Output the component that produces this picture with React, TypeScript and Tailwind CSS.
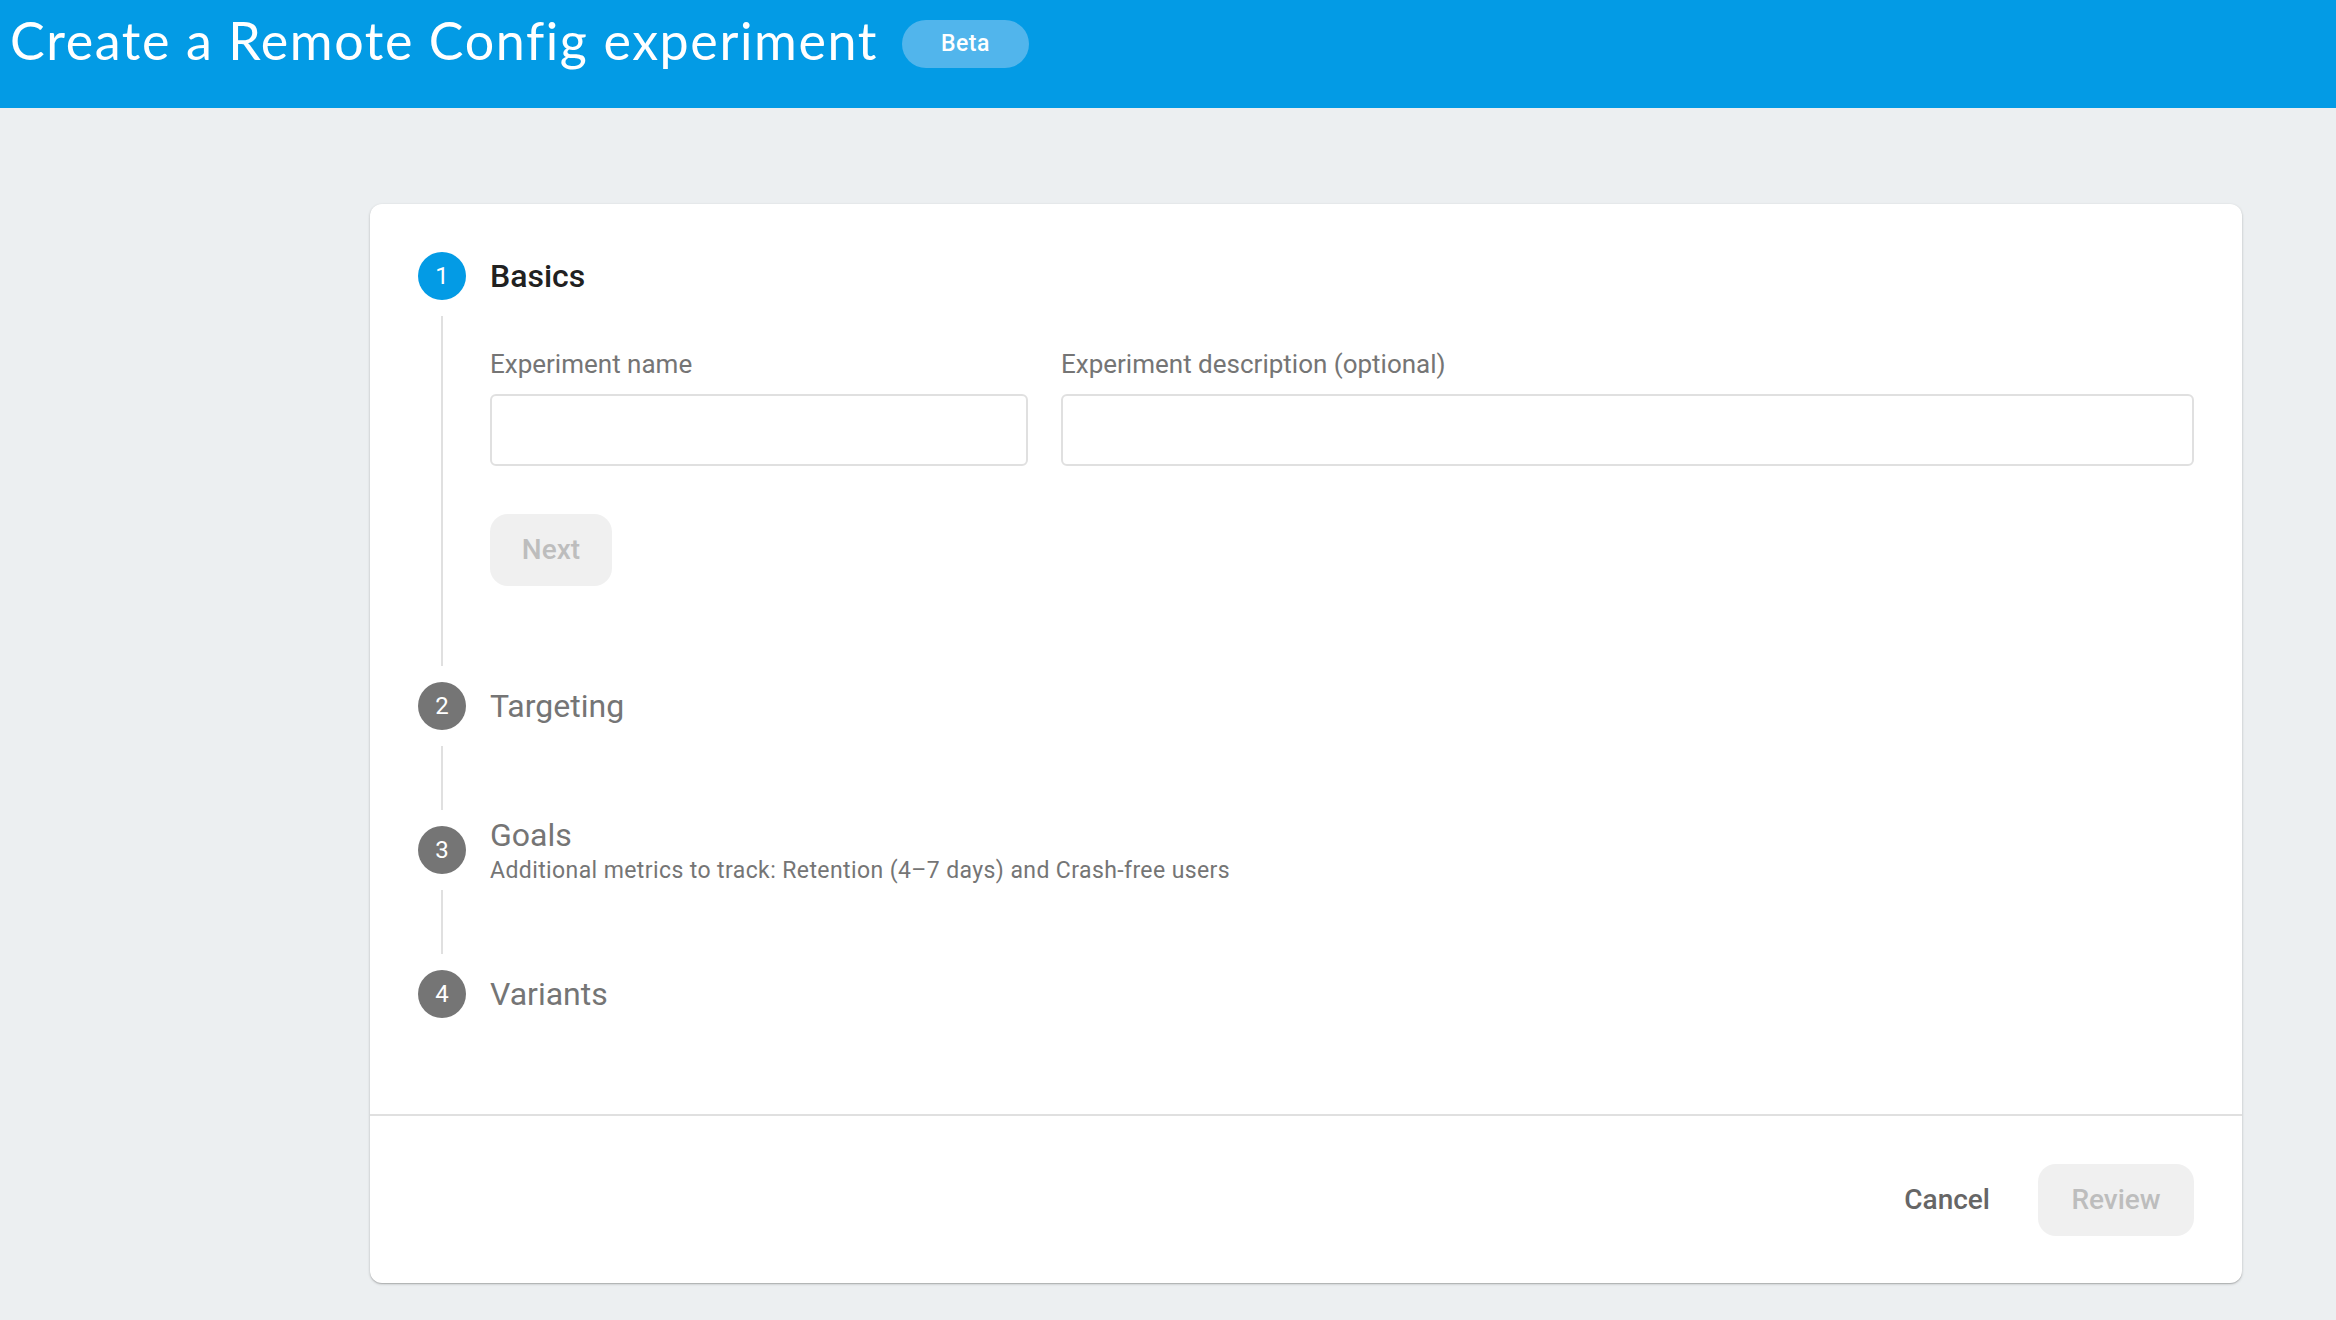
import React from "react";

type Step = {
  n: number;
  title: string;
  active?: boolean;
  subtitle?: string;
};

const steps: Step[] = [
  { n: 1, title: "Basics", active: true },
  { n: 2, title: "Targeting" },
  {
    n: 3,
    title: "Goals",
    subtitle: "Additional metrics to track: Retention (4–7 days) and Crash-free users",
  },
  { n: 4, title: "Variants" },
];

function BasicsForm() {
  return (
    <div className="pb-24">
      <div className="mt-12 flex gap-[33px]">
        <div className="w-[538px] shrink-0">
          <label className="block text-[26px] leading-8 text-[#757575]">Experiment name</label>
          <input className="mt-[14px] block h-[72px] w-full rounded-md border-2 border-[#e0e0e0] bg-white px-4 text-[26px] outline-none" />
        </div>
        <div className="flex-1">
          <label className="block text-[26px] leading-8 text-[#757575]">
            Experiment description (optional)
          </label>
          <input className="mt-[14px] block h-[72px] w-full rounded-md border-2 border-[#e0e0e0] bg-white px-4 text-[26px] outline-none" />
        </div>
      </div>
      <button
        disabled
        className="mt-12 h-[72px] w-[122px] rounded-[18px] bg-[#f0f0f0] text-[28px] font-medium text-[#bdbdbd]"
      >
        Next
      </button>
    </div>
  );
}

function StepRow({ step, last }: { step: Step; last: boolean }) {
  return (
    <div className="flex gap-6">
      <div className="flex w-12 shrink-0 flex-col items-center">
        <div
          className={`flex h-12 w-12 items-center justify-center rounded-full text-[24px] text-white ${
            step.active ? "bg-[#039be5]" : "bg-[#757575]"
          }`}
        >
          {step.n}
        </div>
        {!last && <div className="my-4 w-0.5 flex-1 bg-[#e0e0e0]" />}
      </div>
      <div className="flex-1">
        <div className="flex h-12 flex-col justify-center">
          <div
            className={`text-[32px] leading-10 ${
              step.active ? "font-medium text-[#212121]" : "text-[#757575]"
            }`}
          >
            {step.title}
          </div>
          {step.subtitle && (
            <div className="mt-0.5 text-[23px] leading-7 tracking-[0.4px] text-[#757575]">
              {step.subtitle}
            </div>
          )}
        </div>
        {step.active ? <BasicsForm /> : !last && <div className="h-24" />}
      </div>
    </div>
  );
}

export default function App() {
  return (
    <div className="min-h-screen bg-[#eceff1] font-['Roboto',sans-serif]">
      <header className="flex h-[108px] items-start bg-[#039be5] pl-[10px]">
        <h1 className="mt-[9px] font-['Lato',sans-serif] text-[52px] leading-[62px] font-normal tracking-[1.6px] text-white">
          Create a Remote Config experiment
        </h1>
        <span className="ml-6 mt-[20px] flex h-12 w-[127px] items-center justify-center rounded-full bg-[#51b5ec] text-[23px] font-medium tracking-[0.5px] text-white">
          Beta
        </span>
      </header>

      <main className="pl-[370px] pt-24">
        <div className="w-[1872px] rounded-xl bg-white shadow-[0_1px_3px_rgba(0,0,0,0.2),0_1px_1px_rgba(0,0,0,0.14)]">
          <div className="px-12 pb-24 pt-12">
            {steps.map((s, i) => (
              <StepRow key={s.n} step={s} last={i === steps.length - 1} />
            ))}
          </div>
          <div className="flex h-[169px] items-center justify-end gap-4 border-t-2 border-[#e0e0e0] pr-12">
            <button className="h-[72px] rounded-[18px] px-8 text-[28px] font-medium text-[#666666]">
              Cancel
            </button>
            <button
              disabled
              className="h-[72px] w-[156px] rounded-[18px] bg-[#f0f0f0] text-[28px] font-medium text-[#bdbdbd]"
            >
              Review
            </button>
          </div>
        </div>
      </main>
    </div>
  );
}
